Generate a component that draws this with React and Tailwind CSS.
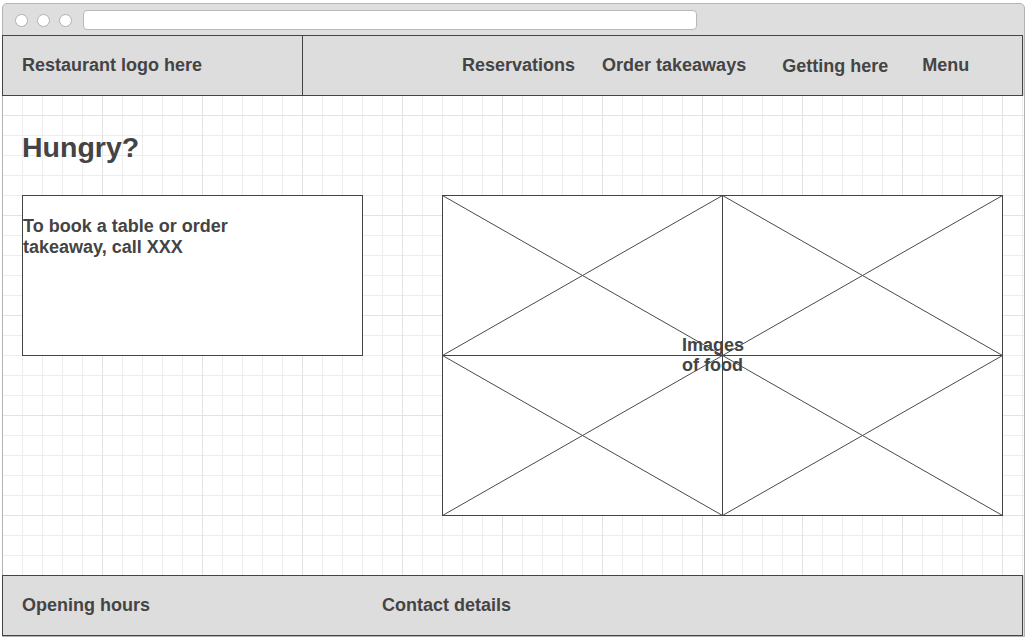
import React from 'react';

// Wireframe of a restaurant landing page inside a browser frame
const navItems = [
  { label: 'Reservations', cls: 'ml-[159px]' },
  { label: 'Order takeaways', cls: 'ml-[27px]' },
  { label: 'Getting here', cls: 'ml-[36px] translate-y-px' },
  { label: 'Menu', cls: 'ml-[34px]' },
];

function ImagePlaceholder() {
  return (
    <div className="relative ml-[79px] w-[561px] h-[321px] bg-white">
      <svg width="561" height="321" className="block" stroke="#4a4a4a" strokeWidth="1" fill="none">
        <line x1="0.5" y1="0.5" x2="280.5" y2="160.5" />
        <line x1="280.5" y1="0.5" x2="0.5" y2="160.5" />
        <line x1="280.5" y1="0.5" x2="560.5" y2="160.5" />
        <line x1="560.5" y1="0.5" x2="280.5" y2="160.5" />
        <line x1="0.5" y1="160.5" x2="280.5" y2="320.5" />
        <line x1="280.5" y1="160.5" x2="0.5" y2="320.5" />
        <line x1="280.5" y1="160.5" x2="560.5" y2="320.5" />
        <line x1="560.5" y1="160.5" x2="280.5" y2="320.5" />
        <line x1="280.5" y1="0.5" x2="280.5" y2="320.5" stroke="#444" />
        <line x1="0.5" y1="160.5" x2="560.5" y2="160.5" stroke="#444" />
        <rect x="0.5" y="0.5" width="560" height="320" stroke="#444" />
      </svg>
      <div className="absolute left-[240px] top-[140px] text-[18px] leading-[20px] font-bold">
        Images<br />of food
      </div>
    </div>
  );
}

export default function App() {
  return (
    <div className="w-[1026px] h-[638px] bg-white pl-[2px] pt-[3px] font-['Liberation_Sans',Arial,sans-serif] text-[#444]">
      <div className="w-[1023px] h-[634px] flex flex-col border border-[#b4b4b4] rounded-t-[5px] bg-[#dedede]">
        {/* Title bar */}
        <div className="h-[31px] flex items-start pl-[12px] shrink-0">
          <div className="flex gap-[9px] mt-[10px]">
            <div className="w-[13px] h-[13px] rounded-full bg-white border border-[#b0b0b0]" />
            <div className="w-[13px] h-[13px] rounded-full bg-white border border-[#b0b0b0]" />
            <div className="w-[13px] h-[13px] rounded-full bg-white border border-[#b0b0b0]" />
          </div>
          <div className="ml-[11px] mt-[6px] w-[614px] h-[20px] rounded-[4px] bg-white border border-[#b8b8b8]" />
        </div>

        {/* Header */}
        <div className="-ml-px w-[1021px] h-[61px] shrink-0 flex border border-[#444] bg-[#dddddd] text-[18px] leading-[21px] font-bold">
          <div className="w-[300px] border-r border-[#444] flex items-center pl-[19px]">
            Restaurant logo here
          </div>
          <nav className="flex items-center">
            {navItems.map(item => (
              <span key={item.label} className={item.cls}>{item.label}</span>
            ))}
          </nav>
        </div>

        {/* Main grid canvas */}
        <div className="h-[479px] shrink-0 bg-white bg-[linear-gradient(to_right,#e3e3e3_1px,transparent_1px),linear-gradient(to_bottom,#e3e3e3_1px,transparent_1px),linear-gradient(to_right,#ededed_1px,transparent_1px),linear-gradient(to_bottom,#ededed_1px,transparent_1px)] bg-[size:100px_100px,100px_100px,20px_20px,20px_20px] bg-[position:99px_19px,99px_19px,19px_19px,19px_19px] pl-[19px] pt-[37px]">
          <h1 className="text-[28.5px] leading-[28px] font-bold">Hungry?</h1>
          <div className="flex items-start mt-[34px]">
            <div className="w-[341px] h-[161px] border border-[#444] bg-white pt-[20px] text-[18px] leading-[21px] font-bold">
              To book a table or order<br />takeaway, call XXX
            </div>
            <ImagePlaceholder />
          </div>
        </div>

        {/* Footer */}
        <div className="-ml-px w-[1021px] h-[61px] shrink-0 flex items-center border border-[#444] bg-[#dddddd] pl-[19px] text-[18px] leading-[21px] font-bold">
          <span className="w-[360px]">Opening hours</span>
          <span>Contact details</span>
        </div>
      </div>
    </div>
  );
}
